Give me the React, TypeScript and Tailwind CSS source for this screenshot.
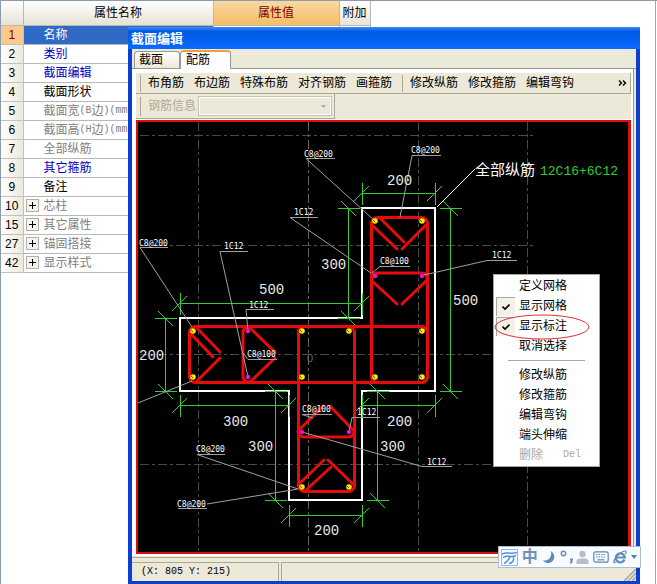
const rows = [
  { no: 1, name: "名称", tone: "text-white" },
  { no: 2, name: "类别", tone: "text-[#0000c0]" },
  { no: 3, name: "截面编辑", tone: "text-[#0000c0]" },
  { no: 4, name: "截面形状", tone: "text-black" },
  { no: 5, name: "截面宽", unit: ["(B", "边", ")(mm)"], tone: "text-[#808080]" },
  { no: 6, name: "截面高", unit: ["(H", "边", ")(mm)"], tone: "text-[#808080]" },
  { no: 7, name: "全部纵筋", tone: "text-[#808080]" },
  { no: 8, name: "其它箍筋", tone: "text-[#0000c0]" },
  { no: 9, name: "备注", tone: "text-black" },
  { no: 10, name: "芯柱", tone: "text-[#808080]", group: true },
  { no: 15, name: "其它属性", tone: "text-[#808080]", group: true },
  { no: 27, name: "锚固搭接", tone: "text-[#808080]", group: true },
  { no: 42, name: "显示样式", tone: "text-[#808080]", group: true },
];

function PropertyTable() {
  return (
    <table className="w-[369px] table-fixed border-collapse">
      <colgroup>
        <col className="w-[22px]" />
        <col className="w-[190px]" />
        <col className="w-[126px]" />
        <col className="w-[31px]" />
      </colgroup>
      <thead>
        <tr className="h-6 bg-linear-to-b from-white to-[#e6e3d6]">
          <th className="border-r border-b border-[#b8b8b0]" />
          <th className="border-r border-b border-[#b8b8b0] font-normal">属性名称</th>
          <th className="border-r border-b border-[#b8b8b0] bg-linear-to-b from-[#f9d9a0] to-[#f3bd62] font-normal text-[#800000]">
            属性值
          </th>
          <th className="border-r border-b border-[#b8b8b0] p-0 font-normal">附加</th>
        </tr>
      </thead>
      <tbody>
        {rows.map((row) => (
          <tr key={row.no} className="h-[19px]">
            <th
              className={`border-r border-b border-[#c4c2b8] p-0 font-normal ${
                row.no === 1
                  ? "bg-[#fbc98b] text-[#800000]"
                  : "bg-linear-to-r from-white to-[#ebe8dc]"
              }`}
            >
              {row.no}
            </th>
            <td className={`border-r border-b border-[#b8b8b8] p-0 ${row.no === 1 ? "bg-[#316ac5]" : ""}`}>
              <div className={`flex h-[18px] items-center whitespace-nowrap ${row.tone}`}>
                <span className="flex w-5 shrink-0 pl-0.5">
                  {row.group && (
                    <button
                      aria-label={`展开${row.name}`}
                      className="flex size-[13px] items-center justify-center border border-[#b0b0a8] bg-[#f4f3ee]"
                    >
                      <svg viewBox="0 0 7 7" className="size-[7px]" stroke="#000" shapeRendering="crispEdges">
                        <path d="M0 3.5h7M3.5 0v7" />
                      </svg>
                    </button>
                  )}
                </span>
                {row.name}
                {row.unit && (
                  <>
                    <span className="font-['Liberation_Mono',monospace] text-[10px]">{row.unit[0]}</span>
                    {row.unit[1]}
                    <span className="font-['Liberation_Mono',monospace] text-[10px]">{row.unit[2]}</span>
                  </>
                )}
              </div>
            </td>
            <td className="border-r border-b border-[#b8b8b8]" />
            <td className="border-r border-b border-[#b8b8b8]" />
          </tr>
        ))}
      </tbody>
    </table>
  );
}

// text origin, then the underline and leader as one path
const labels = [
  { text: "C8@200", x: 304, y: 157, line: "M335 158.500H306L375 221" },
  { text: "C8@200", x: 411, y: 153, line: "M441 155.500H412L400 217" },
  { text: "1C12", x: 294, y: 215, line: "M318 217.500H290L371 273" },
  { text: "C8@100", x: 380, y: 264, line: "M410 266.500H380L372 273" },
  { text: "1C12", x: 492, y: 258, line: "M517 260.500H487L424 275" },
  { text: "C8@200", x: 139, y: 246, line: "M168 247.500H140L192 327" },
  { text: "1C12", x: 224, y: 249, line: "M248 251.500H220L248 377" },
  { text: "1C12", x: 249, y: 308, line: "M274 309.500H246L248 331" },
  { text: "C8@100", x: 247, y: 357, line: "M277 359.500H248L243 353" },
  { text: "C8@100", x: 302, y: 412, line: "M332 414.500H302L313 418" },
  { text: "1C12", x: 357, y: 415, line: "M380 417.500H352L349 432" },
  { text: "1C12", x: 427, y: 465, line: "M452 466.500H422L302 432" },
  { text: "C8@200", x: 196, y: 452, line: "M225 454.500H197L298 489" },
  { text: "C8@200", x: 177, y: 507, line: "M178 508.500H207M207 504L298 489" },
];

const horizontalDims = [
  { a: 362, b: 435, at: 193, text: "200", x: 387, y: 185 },
  { a: 180, b: 362, at: 303, text: "500", x: 259, y: 294 },
  { a: 180, b: 289, at: 405, text: "300", x: 223, y: 426 },
  { a: 362, b: 435, at: 405, text: "200", x: 387, y: 426 },
  { a: 289, b: 362, at: 515, text: "200", x: 314, y: 535 },
];

const verticalDims = [
  { a: 208, b: 391, at: 450, text: "500", x: 453, y: 305 },
  { a: 208, b: 318, at: 348, text: "300", x: 321, y: 269 },
  { a: 318, b: 391, at: 165, text: "200", x: 139, y: 360 },
  { a: 391, b: 500, at: 275, text: "300", x: 248, y: 451 },
  { a: 391, b: 500, at: 377, text: "300", x: 380, y: 451 },
];

const bars = [
  [193, 331], [193, 377], [302, 331], [302, 377], [349, 331], [422, 331],
  [375, 377], [422, 377], [302, 487], [349, 487], [375, 221], [422, 221],
];

const sideBars = [[248, 331], [248, 377], [375, 276], [422, 276], [302, 432], [349, 432]];

function SectionDrawing() {
  return (
    <svg viewBox="138 122 491 430" className="block h-[430px] w-[491px] shrink-0">
      <g stroke="#4a4a4a" strokeDasharray="9 3 3 3" fill="none" shapeRendering="crispEdges">
        <path d="M198.500 122V552M418.500 122V552M527.500 122V552" />
        <path d="M140 135.500H535M140 245.500H535M140 354.500H535M140 464.500H535" />
        <path d="M308.500 122V552" stroke="#666" />
      </g>
      <text x="307" y="362" fontSize="11" fill="#666">0</text>

      <path
        d="M362 208H435V391H362V500H289V391H180V318H362Z"
        fill="none"
        stroke="#fff"
        strokeWidth="2"
        shapeRendering="crispEdges"
      />

      <g stroke="#32cd32" fill="none">
        {horizontalDims.map((d) => (
          <g key={`${d.a}-${d.at}`}>
            <path
              shapeRendering="crispEdges"
              d={`M${d.a} ${d.at + 0.5}H${d.b}M${d.a + 0.5} ${d.at - 10}v22M${d.b + 0.5} ${d.at - 10}v22`}
            />
            <path d={`M${d.a - 8} ${d.at + 8}l15 -15M${d.b - 8} ${d.at + 8}l15 -15`} />
          </g>
        ))}
        {verticalDims.map((d) => (
          <g key={`${d.a}-${d.at}`}>
            <path
              shapeRendering="crispEdges"
              d={`M${d.at + 0.5} ${d.a}V${d.b}M${d.at - 10} ${d.a + 0.5}h22M${d.at - 10} ${d.b + 0.5}h22`}
            />
            <path d={`M${d.at - 7} ${d.a - 7}l15 15M${d.at - 7} ${d.b - 7}l15 15`} />
          </g>
        ))}
      </g>

      <g stroke="#e60c0c" strokeWidth="3" fill="none" strokeLinecap="round">
        <rect x="189.500" y="326.500" width="238" height="56" rx="6" />
        <rect x="371.500" y="217.500" width="56" height="165" rx="6" />
        <rect x="298.500" y="326.500" width="56" height="165" rx="6" />
        <path d="M190 333L213 357M197 328L220 352M220 358L197 381" />
        <path d="M250 328L275 352M275 358L250 382M250 327Q243 327 243 333V376Q243 382 250 382" />
        <path d="M372 225L397 249M380 218L404 242M426 225L402 249" />
        <path d="M372 281L397 304M426 281L402 304M372 280Q371 273 378 273H421Q428 273 427 280" />
        <path d="M298 431L323 406M354 431L330 406M298 431Q298 437 305 437H348Q354 437 354 431" />
        <path d="M298 485L324 460M305 491L331 467M354 485L328 460" />
      </g>

      <g stroke="#a0a0a0" fill="none">
        {labels.map((l) => (
          <path key={l.line} d={l.line} />
        ))}
        <path d="M138 403L192 381" />
        <path d="M437 207L475 169" stroke="#fff" />
      </g>

      {bars.map(([x, y]) => (
        <g key={`${x}-${y}`}>
          <circle cx={x} cy={y} r="2.800" fill="#ffe600" />
          <path d={`M${x - 2} ${y - 1}l2 2`} stroke="#6b6000" />
        </g>
      ))}
      {sideBars.map(([x, y]) => (
        <circle key={`${x}-${y}`} cx={x} cy={y} r="2.200" fill="#e012e0" />
      ))}

      <g fill="#fff" fontSize="8" className="font-['DejaVu_Sans_Mono',monospace]">
        {labels.map((l) => (
          <text key={l.line} x={l.x} y={l.y}>{l.text}</text>
        ))}
      </g>
      <g fill="#e8e8e8" fontSize="14" className="font-['Liberation_Mono',monospace]">
        {[...horizontalDims, ...verticalDims].map((d) => (
          <text key={`${d.x}-${d.y}`} x={d.x} y={d.y}>{d.text}</text>
        ))}
      </g>
      <text x="475" y="175" fontSize="15" fill="#fff">全部纵筋</text>
      <text x="540" y="175" fontSize="13" fill="#32cd32" className="font-['Liberation_Mono',monospace]">
        12C16+6C12
      </text>
    </svg>
  );
}

const menu = [
  { name: "定义网格" },
  { name: "显示网格", checked: true },
  { name: "显示标注", checked: true },
  { name: "取消选择" },
  null,
  { name: "修改纵筋" },
  { name: "修改箍筋" },
  { name: "编辑弯钩" },
  { name: "端头伸缩" },
  { name: "删除", shortcut: "Del", disabled: true },
];

function ContextMenu() {
  return (
    <div className="absolute top-[152px] left-[355px] w-[107px] border border-[#a8a69a] bg-white px-0.5 py-px">
      {menu.map((item, i) =>
        item === null ? (
          <hr key={i} className="mx-3 my-1 border-[#aca899]" />
        ) : (
          <button
            key={item.name}
            disabled={item.disabled}
            className="flex h-5 w-full items-center text-left disabled:text-[#aca899]"
          >
            <span
              className={`mr-1 flex size-[19px] shrink-0 items-center justify-center ${
                item.checked ? "border-t border-l border-[#aca899] bg-[#f3f1ea]" : ""
              }`}
            >
              {item.checked && (
                <svg viewBox="0 0 8 8" className="size-2" fill="none" stroke="#000" strokeWidth="1.600">
                  <path d="M.5 3.500L3 6L7.500 1.500" />
                </svg>
              )}
            </span>
            {item.name}
            {item.shortcut && (
              <span className="ml-auto pr-4 font-['Liberation_Mono',monospace] text-[10px]">
                {item.shortcut}
              </span>
            )}
          </button>
        ),
      )}
      <svg viewBox="0 0 96 26" className="absolute top-[39px] left-0 h-[26px] w-24" fill="none" stroke="#e0303c">
        <ellipse cx="48" cy="13" rx="47" ry="12" />
      </svg>
    </div>
  );
}

function InputBar() {
  return (
    <div className="absolute right-[-5px] bottom-[13px] flex h-[22px] w-[143px] items-center justify-between border border-[#a9bfd6] bg-[#f8fbff] pr-[3px] pl-0.5 text-[#6f93b8]">
      <button aria-label="输入法" className="flex size-[17px] items-center justify-center border border-[#9db8d6]">
        <svg viewBox="0 0 15 15" className="size-[15px]" fill="none" stroke="#4a94dc" strokeWidth="1.500">
          <path d="M0 4C5 1 9 5 15 2.500M1 7.500C5 4.500 9 8 14 5.500M8 6.500C7 10 5 12 2 13.500M11 7C13 10 10 13 7 13.500" />
        </svg>
      </button>
      <button className="text-base leading-4 font-bold">中</button>
      <button aria-label="半角">
        <svg viewBox="0 0 14 14" className="size-3.5" fill="#5f8db9">
          <path d="M9 1C15 5 12 13 6 13C3.500 13 2 12 1 10.500C7 11 10 7 9 1Z" />
        </svg>
      </button>
      <button aria-label="标点">
        <svg viewBox="0 0 13 14" className="h-3.5 w-[13px]" fill="none" stroke="#6f93b8" strokeWidth="1.500">
          <circle cx="3.500" cy="3.500" r="2.200" />
          <path d="M10 9.500h2c0 2-.5 3-2 3.500" strokeWidth="2" />
        </svg>
      </button>
      <button aria-label="用户">
        <svg viewBox="0 0 13 14" className="h-3.5 w-[13px]" fill="#b4bfca">
          <circle cx="6.500" cy="4" r="3.200" />
          <path d="M.5 14V11Q1 8.500 4 8.500H9Q12 8.500 12.500 11V14Z" />
        </svg>
      </button>
      <button aria-label="软键盘">
        <svg viewBox="0 0 16 12" className="h-3 w-4" fill="none" stroke="#5f87af" strokeWidth="1.200">
          <rect x=".8" y=".8" width="14.400" height="10.400" rx="2" />
          <path d="M3 3.500h10M3 6h10" strokeDasharray="1.500 1" />
          <path d="M4.500 8.800h7" />
        </svg>
      </button>
      <button aria-label="浏览器">
        <svg viewBox="0 0 14 14" className="size-3.5" fill="none" stroke="#5f8db9">
          <path d="M11.500 9.500A4.500 4.500 0 1 1 11.800 7.500H4" strokeWidth="2.200" />
          <path d="M3 12C0 14 0 11 3 7.500C7 2.500 12 0 13 1.500C13.400 2.200 13 3 12.500 4" strokeWidth="1.200" />
        </svg>
      </button>
      <button aria-label="更多">
        <svg viewBox="0 0 6 4" className="h-1 w-1.5" fill="#4f81b5">
          <path d="M0 0h6L3 4Z" />
        </svg>
      </button>
    </div>
  );
}

function EditorWindow() {
  return (
    <section className="absolute top-[26px] right-[17px] left-[127px] border-x-4 border-b-[3px] border-[#0a3fd0] bg-[#ece9d8]">
      <h1 className="-mx-1 h-[22px] bg-linear-to-b from-[#3c8cf4] via-[#0058e6] via-20% to-[#0a6cff] pl-[3px] text-[13px] leading-[24px] font-bold text-white">
        截面编辑
      </h1>

      <div role="tablist" className="flex items-end border-b border-[#919b9c] pt-px pl-0.5">
        <button
          role="tab"
          aria-selected={false}
          className="h-[17px] w-[46px] rounded-t-sm border border-b-0 border-[#919b9c] bg-linear-to-b from-white to-[#ece9d8] pl-1 text-left leading-[17px]"
        >
          截面
        </button>
        <button
          role="tab"
          aria-selected
          className="-mb-px h-[19px] w-[51px] rounded-t-sm border border-t-2 border-b-0 border-[#919b9c] border-t-[#f0a030] bg-white pl-[5px] text-left leading-[15px]"
        >
          配筋
        </button>
      </div>

      <div className="mr-0.5 border-r border-[#919b9c] bg-white pt-1 pr-0.5 pl-1">
        <div className="bg-[#ece9d8]">
          <div className="flex h-[21px] items-center gap-2.5 border-r border-b border-[#aca899] pl-1">
            <span className="h-[17px] border-l border-[#aca899]" />
            <div className="-ml-[3px] flex items-center gap-2.5 whitespace-nowrap">
              <button>布角筋</button>
              <button>布边筋</button>
              <button>特殊布筋</button>
              <button>对齐钢筋</button>
              <button>画箍筋</button>
            </div>
            <span className="-mr-[3px] h-[17px] border-l border-[#aca899]" />
            <div className="flex items-center gap-2.5 whitespace-nowrap">
              <button>修改纵筋</button>
              <button>修改箍筋</button>
              <button>编辑弯钩</button>
            </div>
            <button aria-label="更多工具" className="ml-auto pr-[3px]">
              <svg viewBox="0 0 9 6" className="h-1.5 w-[9px]" fill="none" stroke="#000" strokeWidth="1.400">
                <path d="M1 .5L3.500 3L1 5.500M5 .5L7.500 3L5 5.500" />
              </svg>
            </button>
          </div>
          <div className="flex h-[25px] w-[199px] items-center border-r border-b border-[#aca899] pl-1 text-[#aca899]">
            <span className="mr-[7px] h-[19px] border-l border-[#aca899]" />
            <label htmlFor="rebar">钢筋信息</label>
            <div className="relative ml-0.5 flex-1 pr-0.5">
              <select
                id="rebar"
                disabled
                className="block h-5 w-full appearance-none border border-[#c5c2b2] bg-[#ece9d8] shadow-[inset_0_0_0_1px_#fff]"
              />
              <svg viewBox="0 0 5 3" className="absolute top-[9px] right-2 h-[3px] w-[5px]" fill="#aca899">
                <path d="M0 0h5L2.500 3Z" />
              </svg>
            </div>
          </div>
        </div>
        <div className="relative mt-px border-2 border-r-[3px] border-[#dc0c10] bg-black">
          <SectionDrawing />
          <ContextMenu />
        </div>
        <div className="h-0.5" />
      </div>

      <footer className="mt-px flex items-end border-t border-[#aca899] pt-1">
        <p className="h-[19px] w-[147px] border-t border-r border-[#aca899] pl-[9px] font-['Liberation_Mono',monospace] text-[10px] leading-[18px] text-black">
          (X: 805 Y: 215)
        </p>
        <div className="ml-0.5 flex h-[19px] flex-1 items-end justify-end border-t border-l border-[#aca899]">
          <svg viewBox="0 0 12 12" className="size-3" stroke="#a8a493" strokeWidth="1.500">
            <path d="M0 12L12 0M4 12L12 4M8 12L12 8" />
          </svg>
        </div>
      </footer>
      <InputBar />
    </section>
  );
}

export default function App() {
  return (
    <main className="relative min-h-screen border-t border-l border-[#8a9bb0] bg-white pr-px font-['Liberation_Sans','Noto_Sans_CJK_SC',sans-serif] text-xs text-black">
      <div className="min-h-[583px] border-r border-[#8fa9c8]">
        <PropertyTable />
      </div>
      <EditorWindow />
    </main>
  );
}
